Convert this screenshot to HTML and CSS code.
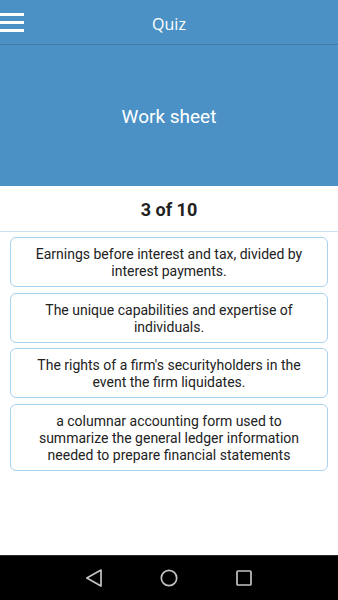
FILE: index.html
```html
<!DOCTYPE html>
<html lang="en">

<head>
  <meta charset="UTF-8">
  <meta name="viewport" content="width=device-width, initial-scale=1.0">
  <title>Quiz</title>
  <link rel="stylesheet" href="styles.css">
</head>

<body>
  <div class="app">
    <div class="toolbar">
      <div class="menu-btn">
        <span></span><span></span><span></span>
      </div>
      <div class="toolbar-title">Quiz</div>
    </div>

    <div class="banner">Work sheet</div>

    <div class="counter">3 of 10</div>

    <div class="answers">
      <div class="answer">Earnings before interest and tax, divided by interest payments.</div>
      <div class="answer">The unique capabilities and expertise of individuals.</div>
      <div class="answer">The rights of a firm's securityholders in the event the firm liquidates.</div>
      <div class="answer">a columnar accounting form used to summarize the general ledger information needed to prepare financial statements</div>
    </div>

    <div class="navbar">
      <svg width="20" height="20" viewBox="0 0 20 20">
        <path d="M17 2 L2.8 10 L17 18 Z" fill="none" stroke="#c4c4c4" stroke-width="1.7" stroke-linejoin="round"/>
      </svg>
      <svg width="20" height="20" viewBox="0 0 20 20">
        <circle cx="10" cy="10" r="7.7" fill="none" stroke="#c4c4c4" stroke-width="1.7"/>
      </svg>
      <svg width="20" height="20" viewBox="0 0 20 20">
        <rect x="3" y="3" width="14" height="14" rx="1" fill="none" stroke="#c4c4c4" stroke-width="1.7"/>
      </svg>
    </div>
  </div>
</body>

</html>
```

FILE: styles.css
```css
/* Basic body styling */
body {
  margin: 0;
  padding: 0;
  font-family: Roboto, "Liberation Sans", sans-serif;
  background: #fff;
}

.app {
  width: 338px;
  height: 600px;
  display: flex;
  flex-direction: column;
}

/* Top toolbar */
.toolbar {
  height: 44px;
  background: #4b91c5;
  border-bottom: 1px solid #3f7ba8;
  display: flex;
  align-items: center;
  position: relative;
}

.menu-btn {
  display: flex;
  flex-direction: column;
  gap: 5px;
  width: 24px;
  margin-top: 1px;
}

.menu-btn span {
  display: block;
  height: 3px;
  background: #fff;
}

.toolbar-title {
  position: absolute;
  left: 0;
  right: 0;
  top: 13px;
  text-align: center;
  color: #fff;
  font-family: "Open Sans", Roboto, sans-serif;
  font-size: 16px;
  pointer-events: none;
}

/* Blue banner */
.banner {
  height: 141px;
  background: #4b91c5;
  color: #fff;
  font-size: 19px;
  display: flex;
  justify-content: center;
  align-items: center;
  padding-top: 2px;
  box-sizing: border-box;
}

.counter {
  height: 46px;
  border-bottom: 1px solid #c9e1f3;
  display: flex;
  justify-content: center;
  align-items: center;
  padding-top: 2px;
  box-sizing: border-box;
  font-size: 18px;
  font-weight: bold;
  color: #222;
}

/* Answer cards */
.answers {
  flex-grow: 1;
  display: flex;
  flex-direction: column;
  gap: 5.5px;
  padding: 5px 10px 0;
}

.answer {
  border: 1px solid #a9d3ef;
  border-radius: 6px;
  padding: 8px 16px 6px;
  text-align: center;
  font-size: 14px;
  line-height: 17px;
  color: #222;
}

/* Android navigation bar */
.navbar {
  height: 45px;
  background: #000;
  border-top: 1px solid #2a2a2a;
  display: flex;
  justify-content: center;
  align-items: center;
  gap: 55px;
  box-sizing: border-box;
}
```
